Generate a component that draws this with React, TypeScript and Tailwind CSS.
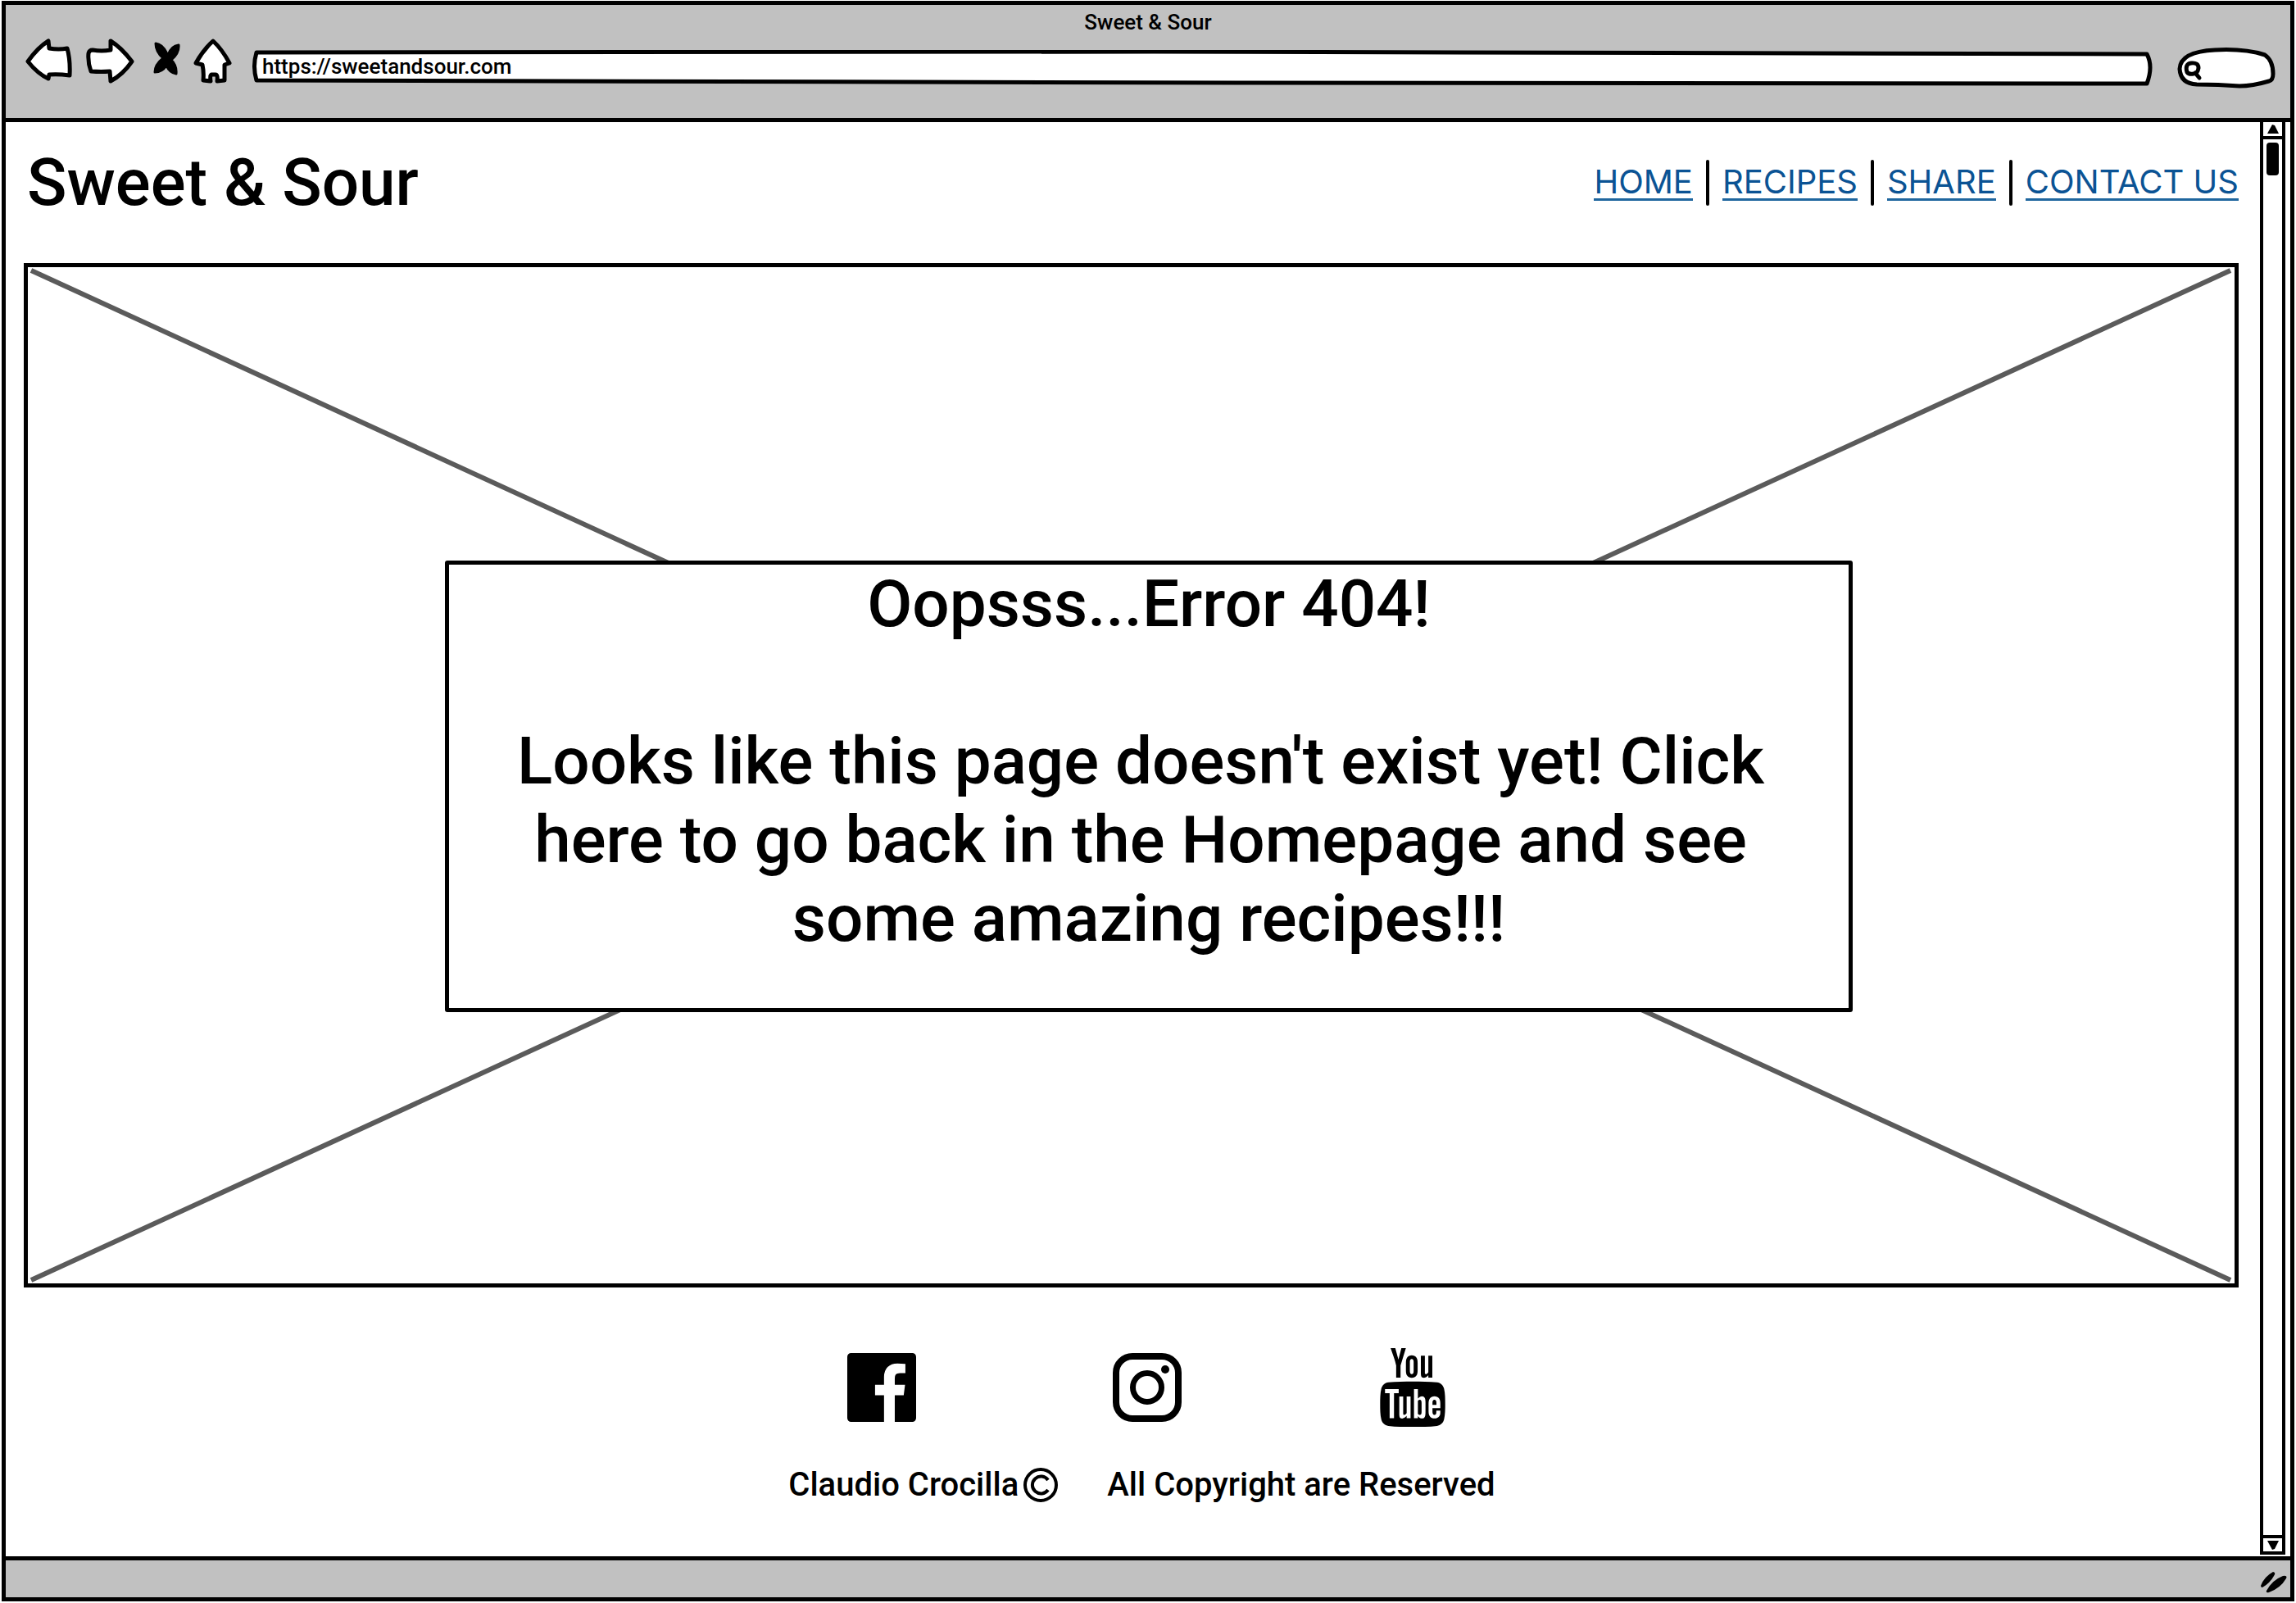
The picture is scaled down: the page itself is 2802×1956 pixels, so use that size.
import type { ReactNode } from "react";
import { TfiYoutube } from "react-icons/tfi";

const stroke = {
  fill: "#ffffff",
  stroke: "#000000",
  strokeWidth: 5,
  strokeLinejoin: "round" as const,
  strokeLinecap: "round" as const,
};

function IconButton({ label, className, children, viewBox }: { label: string; className: string; children: ReactNode; viewBox: string }) {
  return (
    <button type="button" aria-label={label} className={className}>
      <svg viewBox={viewBox} className="block size-full" aria-hidden="true">
        {children}
      </svg>
    </button>
  );
}

function BrowserHeader() {
  return (
    <header className="border-b-5 border-black bg-[#c1c1c1] pb-9">
      <div className="text-center text-[26px] leading-[42px]">Sweet &amp; Sour</div>
      <div className="-mt-0.5 flex items-center pr-[18px] pl-[21px]">
        <div className="mr-6 flex gap-2">
          <IconButton label="Back" className="h-15 w-16" viewBox="0 0 64 60">
            <path {...stroke} d="M6 28 Q18 11 31 3 L32 12 Q44 14 54 12 Q58 26 57 45 Q43 43 32 44 L31 49 Q18 43 6 28Z" />
          </IconButton>
          <IconButton label="Forward" className="h-15 w-16" viewBox="0 0 64 60">
            <path {...stroke} d="M8 18 Q9 14 13 14 Q24 16 35 14 L35 3 Q48 11 61 28 Q50 44 35 52 L34 40 Q24 41 11 40 Q7 29 8 18Z" />
          </IconButton>
          <IconButton label="Stop" className="h-15 w-12" viewBox="0 0 48 60">
            <path
              d="M18 6 Q26 7 31 17 L33 20 Q37 9 46 8 Q47 18 37 26 Q44 33 43 43 Q35 42 31 33 Q26 41 17 41 Q17 32 27 24 Q18 16 18 6Z"
              stroke="#000"
              strokeWidth="3"
              strokeLinejoin="round"
            />
          </IconButton>
          <IconButton label="Home" className="h-15 w-14" viewBox="0 0 56 60">
            <path {...stroke} d="M32 3 Q43 13 52 30 L46 32 L46 51 L37 52 Q38 44 35 44 L30 44 Q28 45 29 52 L20 51 Q21 41 19 32 L11 30 Q20 14 32 3Z" />
          </IconButton>
        </div>
        <div className="relative mt-3 mr-[30px] h-11 flex-1">
          <svg viewBox="0 0 2319 44" preserveAspectRatio="none" className="absolute inset-0 size-full" aria-hidden="true">
            <path {...stroke} vectorEffect="non-scaling-stroke" d="M5 3 L1100 2 L2312 5 Q2320 20 2312 41 L1200 40 L5 37 Q0 20 5 3Z" />
          </svg>
          <input
            aria-label="Address"
            defaultValue="https://sweetandsour.com"
            className="relative block h-10 w-full bg-transparent px-3 text-[26px] leading-10 outline-none"
          />
        </div>
        <div className="relative mt-3 h-[50px] w-30">
          <svg viewBox="0 0 120 50" className="absolute inset-0 size-full" aria-hidden="true">
            <path {...stroke} d="M3 26 Q4 5 46 3 Q82 1 107 9 Q117 16 117 32 Q117 40 112 41 Q92 47 76 47 Q50 45 24 45 Q4 44 3 26Z" />
            <path {...stroke} d="M12 30 Q9 20 17 19 Q26 18 26 25 Q25 32 20 32 Q14 33 12 30Z M22 31 L27 37" />
          </svg>
          <input aria-label="Search" type="search" className="relative block h-full w-full bg-transparent pr-4 pl-9 text-[26px] outline-none" />
        </div>
      </div>
    </header>
  );
}

const links = ["HOME", "RECIPES", "SHARE", "CONTACT US"];

function SiteHeader() {
  return (
    <div className="mb-6 flex h-[148px] items-center justify-between">
      <h1 className="pl-1 text-[80px] leading-24">Sweet &amp; Sour</h1>
      <nav aria-label="Main" className="flex items-center gap-4 font-['Inter',sans-serif] text-[40px] leading-12 font-normal text-[#0b5394]">
        {links.map((link, i) => (
          <div key={link} className="flex items-center gap-4">
            {i > 0 && <span className="h-14 w-1 rounded-full bg-black" />}
            <a href="#" className="border-b-3 border-[#1f669e] leading-10">
              {link}
            </a>
          </div>
        ))}
      </nav>
    </div>
  );
}

function Hero() {
  return (
    <section className="relative grid grid-cols-[509fr_1718fr_466fr] border-5 border-black pt-[358px] pb-[331px]">
      <svg viewBox="0 0 2693 1240" preserveAspectRatio="none" className="absolute inset-0 size-full" aria-hidden="true">
        <path d="M4 4 L2688 1236 M2688 4 L4 1236" stroke="#5b5b5b" strokeWidth="6" vectorEffect="non-scaling-stroke" />
      </svg>
      <div className="relative col-start-2 rounded-[3px] border-5 border-black bg-white pb-[61px] text-center text-[80px] leading-24">
        <h2>Oopsss...Error 404!</h2>
        <p className="mt-24">
          <a href="#">
            <span className="block">Looks like this page doesn't exist yet! Click&nbsp;</span>
            <span className="block">here to go back in the Homepage and see&nbsp;</span>
            <span className="block">some amazing recipes!!!</span>
          </a>
        </p>
      </div>
    </section>
  );
}

function SiteFooter() {
  return (
    <footer className="flex flex-col items-center pt-[74px] pb-[61px] pl-[26px] text-[40px] leading-12">
      <div className="flex h-24 items-center gap-60 pl-3">
        <a href="#" aria-label="Facebook">
          <svg viewBox="128 128 1536 1536" className="size-[84px]" aria-hidden="true">
            <path d="M1579 128q35 0 60 25t25 60v1366q0 35-25 60t-60 25h-391v-595h199l30-232h-229v-148q0-56 23.5-84t91.5-28l122-1v-207q-63-9-178-9-136 0-217.5 80t-81.5 226v171h-200v232h200v595h-735q-35 0-60-25t-25-60v-1366q0-35 25-60t60-25h1366z" />
          </svg>
        </a>
        <a href="#" aria-label="Instagram">
          <svg viewBox="0 0 84 84" className="size-[84px]" aria-hidden="true">
            <rect x="4" y="4" width="76" height="76" rx="20" fill="none" stroke="#000" strokeWidth="8" />
            <circle cx="42" cy="42" r="17.5" fill="none" stroke="#000" strokeWidth="7" />
            <circle cx="64" cy="20" r="5" />
          </svg>
        </a>
        <a href="#" aria-label="YouTube" className="-mx-1.5">
          <TfiYoutube className="size-24" />
        </a>
      </div>
      <div className="mt-[47px] flex items-center">
        <span>Claudio Crocilla</span>
        <svg viewBox="0 0 42 42" className="ml-1.5 size-[42px]" role="img" aria-label="Copyright">
          <circle cx="21" cy="21" r="19" fill="none" stroke="#000" strokeWidth="4" />
          <path d="M30 15 A10.5 10.5 0 1 0 30 27" fill="none" stroke="#000" strokeWidth="4" />
        </svg>
        <span className="ml-15">All Copyright are Reserved</span>
      </div>
    </footer>
  );
}

function Scrollbar() {
  return (
    <div className="flex w-[31px] flex-col border-x-4 border-b-4 border-black">
      <button type="button" aria-label="Scroll up" className="flex h-[21px] items-center justify-center border-b-4 border-black">
        <svg viewBox="0 0 14 11" className="w-3.5" aria-hidden="true">
          <path d="M6 0 L9 1 L14 11 L0 11Z" />
        </svg>
      </button>
      <div className="flex-1 px-1 pt-1">
        <div className="h-10 rounded-sm bg-black" />
      </div>
      <button type="button" aria-label="Scroll down" className="flex h-5 items-center justify-center border-t-4 border-black">
        <svg viewBox="0 0 14 11" className="w-3.5" aria-hidden="true">
          <path d="M0 0 L14 0 L9 10 L6 11Z" />
        </svg>
      </button>
    </div>
  );
}

export default function App() {
  return (
    <div className="min-h-screen bg-white px-0.5 pt-px pb-0.5 font-['Roboto',sans-serif] font-medium text-black">
      <div className="border-5 border-black">
        <BrowserHeader />
        <div className="flex pr-1.5 pb-0.5 pl-[22px]">
          <main className="mr-[26px] flex-1">
            <SiteHeader />
            <Hero />
            <SiteFooter />
          </main>
          <Scrollbar />
        </div>
        <div className="flex h-[50px] justify-end border-t-5 border-black bg-[#c1c1c1] pt-3.5 pr-1">
          <svg viewBox="0 0 32 26" className="h-[26px] w-8" aria-hidden="true">
            <path d="M0 17 Q4 6 15 0 Q19 1 16 5 Q11 14 2 19 Q0 19 0 17Z M7 23 Q14 10 27 5 Q33 4 31 8 Q24 20 10 25 Q6 26 7 23Z" />
          </svg>
        </div>
      </div>
    </div>
  );
}
